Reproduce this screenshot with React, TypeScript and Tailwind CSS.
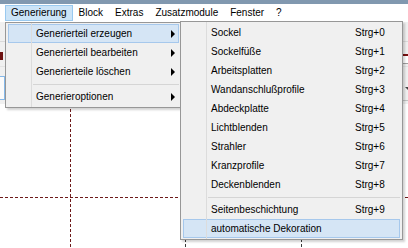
import React from 'react';

type Item = { label: string; shortcut?: string; sub?: boolean; active?: boolean } | 'sep';

const mainItems: Item[] = [
  { label: 'Generierteil erzeugen', sub: true, active: true },
  { label: 'Generierteil bearbeiten', sub: true },
  { label: 'Generierteile löschen', sub: true },
  'sep',
  { label: 'Generieroptionen', sub: true },
];

const subItems: Item[] = [
  { label: 'Sockel', shortcut: 'Strg+0' },
  { label: 'Sockelfüße', shortcut: 'Strg+1' },
  { label: 'Arbeitsplatten', shortcut: 'Strg+2' },
  { label: 'Wandanschlußprofile', shortcut: 'Strg+3' },
  { label: 'Abdeckplatte', shortcut: 'Strg+4' },
  { label: 'Lichtblenden', shortcut: 'Strg+5' },
  { label: 'Strahler', shortcut: 'Strg+6' },
  { label: 'Kranzprofile', shortcut: 'Strg+7' },
  { label: 'Deckenblenden', shortcut: 'Strg+8' },
  'sep',
  { label: 'Seitenbeschichtung', shortcut: 'Strg+9' },
  { label: 'automatische Dekoration', active: true },
];

const menuBar = ['Generierung', 'Block', 'Extras', 'Zusatzmodule', 'Fenster', '?'];

const MenuList: React.FC<{ items: Item[] }> = ({ items }) => (
  <div className="relative pt-[1px] pb-[1px]">
    <div className="absolute top-0 bottom-0 left-[25px] w-px bg-[#dcdcdc] z-10" />
    {items.map((item, i) =>
      item === 'sep' ? (
        <div key={i} className="h-[6px] pt-[3px]">
          <div className="ml-[27px] mr-[2px] h-px bg-[#d5d5d5]" />
        </div>
      ) : (
        <div
          key={i}
          className={`mx-[2px] h-[19px] flex items-center pl-[27px] border ${
            item.active ? 'bg-[#d5e5f5] border-[#a6c8ec]' : 'border-transparent'
          }`}
        >
          <span className="flex-1 whitespace-nowrap">{item.label}</span>
          {item.shortcut && <span className="w-[44px] whitespace-nowrap">{item.shortcut}</span>}
          {item.sub && (
            <span className="mr-[3px] w-0 h-0 border-y-[4px] border-y-transparent border-l-[4px] border-l-black" />
          )}
        </div>
      )
    )}
  </div>
);

export default function App() {
  return (
    <div className="relative w-[408px] h-[248px] overflow-hidden bg-white text-black text-[10px] leading-none font-['Liberation_Sans',Arial,sans-serif]">
      <div className="flex flex-col h-full">
        <div className="h-[4px] bg-[#8198af]" />
        <div className="h-[18px] bg-white flex items-center pl-[5px]">
          {menuBar.map((m, i) => (
            <div
              key={m}
              className={`h-[16px] flex items-center px-[5px] border ${
                i === 0 ? 'bg-[#cce4f7] border-[#99c9ef]' : 'border-transparent'
              }`}
            >
              {m}
            </div>
          ))}
        </div>

        {/* toolbars behind the menus */}
        <div className="h-[20px] bg-[#f0f0f0] border-b border-[#dadada]" />
        <div className="h-[24px] bg-[#f0f0f0] flex justify-between">
          <div className="mt-[10px] w-[3px] h-[8px] bg-[#6e1212]" />
          <div className="w-[6px] mt-[12px] flex flex-col">
            <div className="h-[2px] bg-[#7a1010]" />
            <div className="h-[8px] bg-white border-l border-b border-[#a0a0a0]" />
          </div>
        </div>
        <div className="h-[38px] bg-[#f0f0f0] border-t border-[#e3e3e3] flex justify-between">
          <div className="mt-[9px] w-[5px] h-[24px] bg-[#fbfbfb] border border-l-0 border-[#86b9ea]" />
          <div className="w-[6px] mt-[6px] h-[28px] border-l border-b border-[#c4c4c4] flex items-end pb-[10px] pl-[2px]">
            <div className="w-0 h-0 border-x-[3px] border-x-transparent border-t-[3px] border-t-[#444]" />
          </div>
        </div>

        {/* drawing canvas */}
        <div className="relative flex-1 bg-white">
          <svg className="absolute inset-0" width="408" height="144">
            <line x1="70.5" y1="0" x2="70.5" y2="144" stroke="#6d1a1a" strokeDasharray="3 2" />
            <line x1="0" y1="93.5" x2="408" y2="93.5" stroke="#6d1a1a" strokeDasharray="3 2" />
            <line x1="185.5" y1="0" x2="185.5" y2="144" stroke="#3a3a3a" strokeDasharray="3 2" />
            <line x1="301.5" y1="0" x2="301.5" y2="144" stroke="#3a3a3a" strokeDasharray="3 2" />
          </svg>
        </div>
      </div>

      {/* Generierung dropdown */}
      <div className="absolute left-[5px] top-[22px] w-[177px] bg-[#f0f0f0] border border-[#979797] shadow-[2px_2px_2px_rgba(0,0,0,0.18)]">
        <MenuList items={mainItems} />
      </div>

      {/* Generierteil erzeugen submenu */}
      <div className="absolute left-[180px] top-[21px] w-[223px] bg-[#f0f0f0] border border-[#979797] shadow-[2px_2px_2px_rgba(0,0,0,0.18)]">
        <MenuList items={subItems} />
      </div>
    </div>
  );
}
